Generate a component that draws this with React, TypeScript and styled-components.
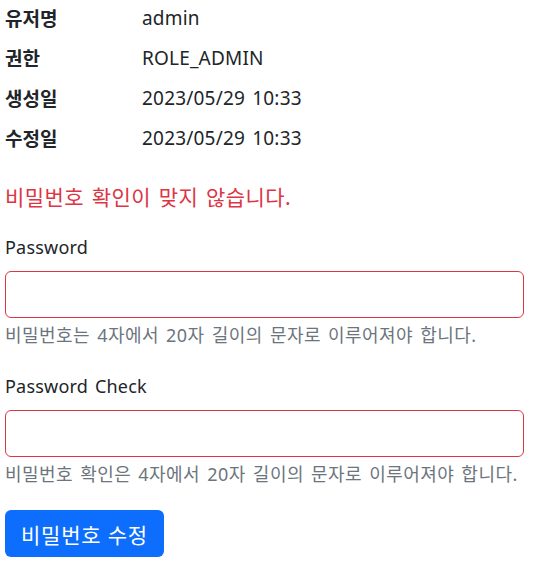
import React from 'react'
import styled, { createGlobalStyle } from 'styled-components'

const GlobalStyle = createGlobalStyle`
  body {
    margin: 0;
    background: #fff;
    color: #212529;
    font-family: "Noto Sans", "Noto Sans CJK KR", sans-serif;
  }
`

const Page = styled.div`
  padding: 0 9px 0 5px;
`

const InfoTable = styled.div`
  display: flex;
  flex-direction: column;
  gap: 4px;
`

const InfoRow = styled.div`
  display: flex;
  align-items: center;
  height: 36px;
  font-size: 19px;
`

const InfoKey = styled.div`
  width: 137px;
  font-weight: 700;
`

const InfoValue = styled.div`
  letter-spacing: 0.2px;
  word-spacing: 2px;
`

const ErrorText = styled.div`
  margin-top: 26px;
  color: #dc3545;
  font-size: 21px;
  line-height: 30px;
  letter-spacing: 0.4px;
  word-spacing: 2px;
`

const Form = styled.form`
  margin-top: 22px;
  display: flex;
  flex-direction: column;
`

const Field = styled.div`
  display: flex;
  flex-direction: column;
  margin-bottom: 25px;
`

const Label = styled.label`
  font-size: 18px;
  line-height: 27px;
  margin-bottom: 10px;
  letter-spacing: 0.2px;
  word-spacing: 2px;
`

const Input = styled.input<{ $invalid?: boolean }>`
  box-sizing: border-box;
  width: 100%;
  height: 47px;
  border: 1px solid ${(p) => (p.$invalid ? '#dc3545' : '#ced4da')};
  border-radius: 6px;
  padding: 8px 16px;
  font-size: 20px;
  outline: none;
`

const Help = styled.div`
  margin-top: 4px;
  color: #6c757d;
  font-size: 18px;
  line-height: 26px;
  letter-spacing: 0.45px;
  word-spacing: 2px;
`

const SubmitButton = styled.button`
  align-self: flex-start;
  margin-top: -2px;
  height: 47px;
  padding: 0 16px;
  border: none;
  border-radius: 6px;
  background: #0d6efd;
  color: #fff;
  font-family: inherit;
  font-size: 21px;
  letter-spacing: 0.8px;
  cursor: pointer;
`

const info = [
  { key: '유저명', value: 'admin' },
  { key: '권한', value: 'ROLE_ADMIN' },
  { key: '생성일', value: '2023/05/29 10:33' },
  { key: '수정일', value: '2023/05/29 10:33' },
]

export default function App() {
  return (
    <>
      <GlobalStyle />
      <Page>
        <InfoTable>
          {info.map((row) => (
            <InfoRow key={row.key}>
              <InfoKey>{row.key}</InfoKey>
              <InfoValue>{row.value}</InfoValue>
            </InfoRow>
          ))}
        </InfoTable>
        <ErrorText>비밀번호 확인이 맞지 않습니다.</ErrorText>
        <Form onSubmit={(e) => e.preventDefault()}>
          <Field>
            <Label>Password</Label>
            <Input type="password" $invalid />
            <Help>비밀번호는 4자에서 20자 길이의 문자로 이루어져야 합니다.</Help>
          </Field>
          <Field>
            <Label>Password Check</Label>
            <Input type="password" $invalid />
            <Help>비밀번호 확인은 4자에서 20자 길이의 문자로 이루어져야 합니다.</Help>
          </Field>
          <SubmitButton type="submit">비밀번호 수정</SubmitButton>
        </Form>
      </Page>
    </>
  )
}
